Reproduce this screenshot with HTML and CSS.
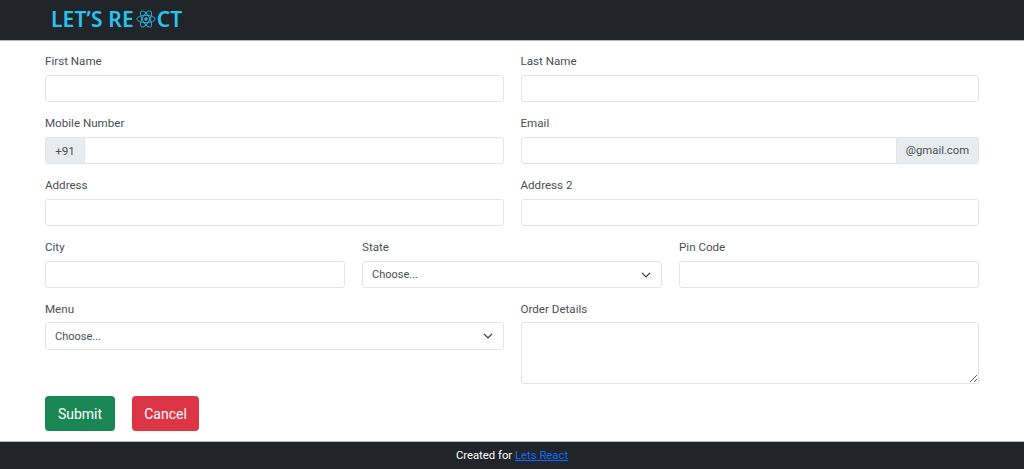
FILE: index.html
```html
<!DOCTYPE html>
<html lang="en">
<head>
<meta charset="utf-8">
<title>Let's React</title>
<link rel="stylesheet" href="styles.css">
</head>
<body>
<header class="navbar">
  <a class="logo" href="#">LET’S RE<svg class="atom" viewBox="0 0 24 24" width="20" height="20" fill="none" stroke="#29b6dc" stroke-width="1.1" aria-hidden="true"><ellipse cx="12" cy="12" rx="11" ry="4.4"/><ellipse cx="12" cy="12" rx="11" ry="4.4" transform="rotate(60 12 12)"/><ellipse cx="12" cy="12" rx="11" ry="4.4" transform="rotate(120 12 12)"/><circle cx="12" cy="12" r="2.1" fill="#29b6dc" stroke="none"/></svg>CT</a>
</header>
<main class="page">
  <form class="form">
    <div class="row">
      <div class="field"><label>First Name</label><input class="control" type="text"></div>
      <div class="field"><label>Last Name</label><input class="control" type="text"></div>
    </div>
    <div class="row">
      <div class="field"><label>Mobile Number</label>
        <div class="group"><span class="addon addon-left">+91</span><input class="control" type="text"></div>
      </div>
      <div class="field"><label>Email</label>
        <div class="group"><input class="control" type="text"><span class="addon addon-right">@gmail.com</span></div>
      </div>
    </div>
    <div class="row">
      <div class="field"><label>Address</label><input class="control" type="text"></div>
      <div class="field"><label>Address 2</label><input class="control" type="text"></div>
    </div>
    <div class="row">
      <div class="field"><label>City</label><input class="control" type="text"></div>
      <div class="field"><label>State</label>
        <div class="select select-short">Choose...<svg class="chev" viewBox="0 0 16 16" width="10" height="10" fill="none" stroke="#343a40" stroke-width="2" stroke-linecap="round" stroke-linejoin="round" aria-hidden="true"><path d="M2 5l6 6 6-6"/></svg></div>
      </div>
      <div class="field"><label>Pin Code</label><input class="control" type="text"></div>
    </div>
    <div class="row row-last">
      <div class="field"><label>Menu</label>
        <div class="select">Choose...<svg class="chev" viewBox="0 0 16 16" width="10" height="10" fill="none" stroke="#343a40" stroke-width="2" stroke-linecap="round" stroke-linejoin="round" aria-hidden="true"><path d="M2 5l6 6 6-6"/></svg></div>
      </div>
      <div class="field"><label>Order Details</label><textarea class="control area"></textarea></div>
    </div>
    <div class="actions">
      <button class="btn btn-green" type="button">Submit</button>
      <button class="btn btn-red" type="button">Cancel</button>
    </div>
  </form>
</main>
<footer class="footer">Created for&nbsp;<a href="#">Lets React</a></footer>
</body>
</html>
```
FILE: styles.css
```css
* { box-sizing: border-box; }
html, body { height: 100%; }
body {
  margin: 0;
  display: flex;
  flex-direction: column;
  height: 469px;
  overflow: hidden;
  background: #fff;
  color: #212529;
  font-family: Roboto, "Noto Sans", sans-serif;
  font-size: 11.6px;
}
.navbar {
  height: 41px;
  flex: none;
  background: #212529;
  border-bottom: 1px solid #b5b6b8;
  display: flex;
  align-items: center;
  padding: 0 0 2px 51px;
}
.logo {
  display: flex;
  align-items: center;
  color: #27c4f2;
  font-family: "Noto Sans", sans-serif;
  font-size: 21px;
  font-weight: 600;
  letter-spacing: 0.15px;
  text-decoration: none;
}
.atom { margin: 0 1px 0 2px; }
.page { flex: 1; padding: 13px 45px 0; }
.form { display: flex; flex-direction: column; gap: 14px; }
.row { display: flex; gap: 17px; }
.field { flex: 1 1 0; min-width: 0; display: flex; flex-direction: column; }
label { height: 21px; line-height: 14px; color: #4a4f54; }
.row-last label { height: 20px; }
.control {
  display: block;
  width: 100%;
  height: 27px;
  padding: 0 9px;
  border: 1px solid #e1e4e8;
  border-radius: 3px;
  background: #fff;
  font: inherit;
  outline: none;
}
.area { height: 62px; resize: vertical; }
.group { display: flex; height: 27px; }
.group .control { flex: 1; min-width: 0; }
.addon {
  display: flex;
  align-items: center;
  justify-content: center;
  background: #e9ecef;
  border: 1px solid #e1e4e8;
  color: #4a4f54;
  white-space: nowrap;
}
.addon-left { width: 40px; border-radius: 3px 0 0 3px; margin-right: -1px; }
.addon-right { width: 83px; font-size: 11.3px; border-radius: 0 3px 3px 0; margin-left: -1px; }
.group .addon-left + .control { border-radius: 0 3px 3px 0; }
.group .control:first-child { border-radius: 3px 0 0 3px; }
.select {
  display: flex;
  align-items: center;
  justify-content: space-between;
  height: 28px;
  padding: 0 10px 0 9px;
  border: 1px solid #e1e4e8;
  border-radius: 3px;
  color: #4a4f54;
  background: #fff;
  font-size: 11px;
}
.select-short { height: 27px; }
.actions { display: flex; gap: 17px; margin-top: -2px; }
.btn {
  height: 35px;
  border: 1px solid transparent;
  border-radius: 4px;
  color: #fff;
  font: inherit;
  font-size: 14px;
}
.btn-green { width: 70px; background: #198754; }
.btn-red { width: 67px; background: #dc3545; }
.footer {
  height: 28px;
  flex: none;
  background: #212529;
  border-top: 1px solid #b5b6b8;
  color: #fff;
  font-size: 11.3px;
  display: flex;
  align-items: center;
  justify-content: center;
}
.footer a { color: #0d6efd; }
```
